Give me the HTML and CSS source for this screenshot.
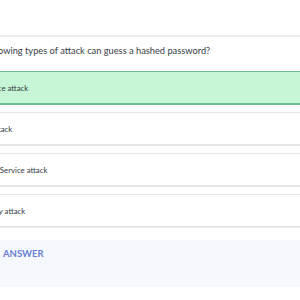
FILE: index.html
```html
<!DOCTYPE html>
<html>
<head>
<meta charset="utf-8">
<link rel="stylesheet" href="styles.css">
</head>
<body>
<div class="card">
  <div class="card-top"></div>
  <p class="question">Which of the following types of attack can guess a hashed password?</p>
  <ul class="options">
    <li class="option correct">Brute force attack</li>
    <li class="option">Replay attack</li>
    <li class="option">Denial of Service attack</li>
    <li class="option">Dictionary attack</li>
  </ul>
  <div class="answer">
    <span class="answer-label">ANSWER</span>
  </div>
</div>
</body>
</html>
```
FILE: styles.css
```css
html, body {
  margin: 0;
  padding: 0;
  background: #ffffff;
  overflow: hidden;
}
body {
  font-family: Lato, "Open Sans", sans-serif;
  color: #363b44;
}
.card {
  width: 420px;
  margin-left: -80px;
}
.card-top {
  height: 35px;
  border-bottom: 2px solid #ededed;
}
.question {
  margin: 0;
  padding: 8px 0 0 10px;
  height: 26px;
  font-size: 9.28px;
  line-height: 12px;
  white-space: nowrap;
}
.options {
  list-style: none;
  margin: 0;
  padding: 0;
  display: flex;
  flex-direction: column;
  gap: 7px;
}
.option {
  box-sizing: border-box;
  height: 34px;
  display: flex;
  align-items: center;
  padding-left: 46px;
  border: 1px solid #e6e6e6;
  border-bottom-width: 2px;
  font-size: 7.8px;
  line-height: 10px;
}
.option.correct {
  background: #c6f6d5;
  border-color: #6fbf8c;
}
.answer {
  margin-top: 12px;
  height: 47px;
  box-sizing: border-box;
  padding: 8px 0 0 83px;
  background: #f5f8fc;
  font-size: 9.5px;
  line-height: 12px;
}
.answer-label {
  font-weight: 700;
  color: #6a7fd6;
}
```
